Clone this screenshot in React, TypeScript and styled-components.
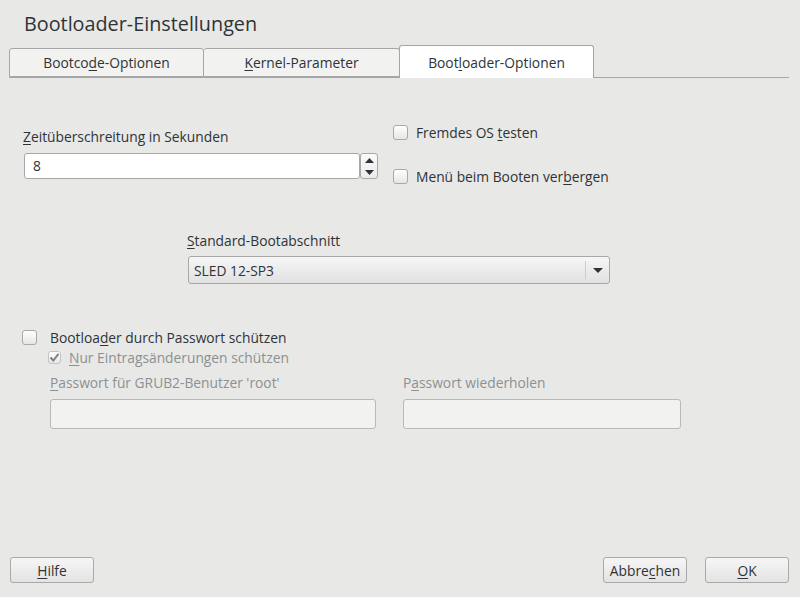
import React from "react";
import styled, { createGlobalStyle } from "styled-components";

const Global = createGlobalStyle`
  html, body { margin: 0; padding: 0; background: #e8e8e7; }
  body { font-family: "Open Sans", "Noto Sans", sans-serif; color: #2e3436; }
  * { box-sizing: border-box; }
`;

const Window = styled.div`
  width: 800px;
  height: 597px;
  display: flex;
  flex-direction: column;
  background: #e8e8e7;
  font-size: 13.8px;
  overflow: hidden;
`;

const Title = styled.h1`
  margin: 0;
  padding: 10px 0 0 24px;
  height: 45px;
  font-size: 19.8px;
  font-weight: 400;
  line-height: 28px;
  color: #2e3436;
`;

const TabBar = styled.div`
  display: flex;
  align-items: flex-end;
  margin: 0 11px 0 9px;
  height: 33px;
  border-bottom: 1px solid #a6a6a6;
`;

const Tab = styled.div<{ $active?: boolean; $first?: boolean }>`
  width: ${(p) => (p.$active ? 195 : p.$first ? 195 : 196)}px;
  height: ${(p) => (p.$active ? 33 : 29)}px;
  margin-bottom: ${(p) => (p.$active ? -1 : 0)}px;
  margin-left: ${(p) => (p.$active ? -1 : 0)}px;
  display: flex;
  align-items: center;
  justify-content: center;
  background: ${(p) => (p.$active ? "#ffffff" : "#f2f2f1")};
  border: 1px solid #a6a6a6;
  border-bottom: ${(p) => (p.$active ? "none" : "1px solid #a6a6a6")};
  border-left: ${(p) => (p.$first || p.$active ? "1px solid #a6a6a6" : "none")};
  border-radius: 3px 3px 0 0;
  font-size: 13.8px;
  color: #2e3436;
  padding-top: ${(p) => (p.$active ? 1 : 0)}px;
`;

const U = styled.span`
  text-decoration: underline;
  text-underline-offset: 2px;
  text-decoration-thickness: 1px;
`;

const Body = styled.div`
  flex: 1;
  display: flex;
  flex-direction: column;
`;

const TopRow = styled.div`
  display: flex;
  padding-top: 44px;
  height: 129px;
`;

const LeftCol = styled.div`
  width: 380px;
  flex-shrink: 0;
  padding-left: 23px;
  padding-top: 5px;
`;

const Label = styled.div<{ $disabled?: boolean }>`
  height: 20px;
  line-height: 20px;
  font-size: 13.8px;
  color: ${(p) => (p.$disabled ? "#8d9091" : "#2e3436")};
  white-space: nowrap;
`;

const SpinRow = styled.div`
  display: flex;
  margin-top: 6px;
  margin-left: 1px;
`;

const SpinInput = styled.div`
  width: 336px;
  height: 26px;
  background: #ffffff;
  border: 1px solid #a8a8a8;
  border-radius: 3px;
  padding-left: 8px;
  line-height: 24px;
  font-size: 13.8px;
`;

const SpinButtons = styled.div`
  width: 18px;
  height: 26px;
  border: 1px solid #a8a8a8;
  border-radius: 3px;
  background: linear-gradient(#fbfbfb, #ebebeb);
  display: flex;
  flex-direction: column;
  align-items: center;
  justify-content: space-around;
`;

const RightCol = styled.div`
  display: flex;
  flex-direction: column;
  gap: 24px;
  padding-left: 13px;
`;

const CheckRow = styled.div<{ $indent?: number; $disabled?: boolean }>`
  display: flex;
  align-items: center;
  height: 20px;
  gap: 8px;
  color: ${(p) => (p.$disabled ? "#8d9091" : "#2e3436")};
  margin-left: ${(p) => p.$indent || 0}px;
`;

const Box = styled.div<{ $size?: number; $disabled?: boolean }>`
  width: ${(p) => p.$size || 15}px;
  height: ${(p) => p.$size || 15}px;
  border: 1px solid ${(p) => (p.$disabled ? "#c4c4c4" : "#a9a9a9")};
  border-radius: 3px;
  background: linear-gradient(#ffffff, #e6e6e6);
  display: flex;
  align-items: center;
  justify-content: center;
  flex-shrink: 0;
`;

const ComboSection = styled.div`
  padding-left: 187px;
  height: 120px;
  padding-top: 24px;
`;

const Combo = styled.div`
  margin-top: 5px;
  margin-left: 1px;
  width: 422px;
  height: 28px;
  border: 1px solid #a8a8a8;
  border-radius: 3px;
  background: linear-gradient(#f6f6f6, #e1e1e1);
  display: flex;
  align-items: center;
  padding-left: 5px;
  font-size: 13.8px;
`;

const ComboText = styled.div`
  flex: 1;
`;

const ComboSep = styled.div`
  width: 1px;
  height: 18px;
  background: #cdcdcd;
`;

const ComboArrow = styled.div`
  width: 23px;
  display: flex;
  justify-content: center;
`;

const PwSection = styled.div`
  display: flex;
  flex-direction: column;
  padding-left: 22px;
`;

const FieldRow = styled.div`
  display: flex;
  gap: 27px;
  margin-left: 28px;
  margin-top: 6px;
`;

const Field = styled.div<{ $w: number }>`
  width: ${(p) => p.$w}px;
  display: flex;
  flex-direction: column;
`;

const PwInput = styled.div`
  margin-top: 6px;
  height: 30px;
  background: #f2f2f1;
  border: 1px solid #b9b9b9;
  border-radius: 3px;
`;

const Spacer = styled.div`
  flex: 1;
`;

const Footer = styled.div`
  display: flex;
  padding: 0 11px 14px 10px;
  gap: 18px;
`;

const Button = styled.button`
  width: 84px;
  height: 26px;
  border: 1px solid #a9a9a9;
  border-radius: 3px;
  background: linear-gradient(#f6f6f6, #e3e3e3);
  font-family: "Open Sans", "Noto Sans", sans-serif;
  font-size: 13.8px;
  color: #2e3436;
  padding: 0;
`;

const Check = () => (
  <svg width="11" height="11" viewBox="0 0 11 11">
    <path d="M1.5 5.5 L4.3 8.5 L9.5 1.8" fill="none" stroke="#7f8283" strokeWidth="2" />
  </svg>
);

export default function App() {
  return (
    <Window>
      <Global />
      <Title>Bootloader-Einstellungen</Title>
      <TabBar>
        <Tab $first>
          <span>
            Bootco<U>d</U>e-Optionen
          </span>
        </Tab>
        <Tab>
          <span>
            <U>K</U>ernel-Parameter
          </span>
        </Tab>
        <Tab $active>
          <span>
            Boot<U>l</U>oader-Optionen
          </span>
        </Tab>
      </TabBar>
      <Body>
        <TopRow>
          <LeftCol>
            <Label>
              <U>Z</U>eitüberschreitung in Sekunden
            </Label>
            <SpinRow>
              <SpinInput>8</SpinInput>
              <SpinButtons>
                <svg width="9" height="5" viewBox="0 0 9 5">
                  <path d="M0 5 L4.5 0 L9 5 Z" fill="#2e3436" />
                </svg>
                <svg width="9" height="5" viewBox="0 0 9 5">
                  <path d="M0 0 L4.5 5 L9 0 Z" fill="#2e3436" />
                </svg>
              </SpinButtons>
            </SpinRow>
          </LeftCol>
          <RightCol>
            <CheckRow>
              <Box />
              <span>
                Fremdes OS <U>t</U>esten
              </span>
            </CheckRow>
            <CheckRow>
              <Box />
              <span>
                Menü beim Booten ver<U>b</U>ergen
              </span>
            </CheckRow>
          </RightCol>
        </TopRow>
        <ComboSection>
          <Label>
            <U>S</U>tandard-Bootabschnitt
          </Label>
          <Combo>
            <ComboText>SLED 12-SP3</ComboText>
            <ComboSep />
            <ComboArrow>
              <svg width="10" height="5" viewBox="0 0 10 5">
                <path d="M0 0 L5 5 L10 0 Z" fill="#2e3436" />
              </svg>
            </ComboArrow>
          </Combo>
        </ComboSection>
        <PwSection>
          <CheckRow>
            <Box />
            <span style={{ marginLeft: 5 }}>
              Bootloa<U>d</U>er durch Passwort schützen
            </span>
          </CheckRow>
          <CheckRow $indent={26} $disabled>
            <Box $size={13} $disabled>
              <Check />
            </Box>
            <span>
              <U>N</U>ur Eintragsänderungen schützen
            </span>
          </CheckRow>
          <FieldRow>
            <Field $w={326}>
              <Label $disabled>
                <U>P</U>asswort für GRUB2-Benutzer 'root'
              </Label>
              <PwInput />
            </Field>
            <Field $w={278}>
              <Label $disabled>
                P<U>a</U>sswort wiederholen
              </Label>
              <PwInput />
            </Field>
          </FieldRow>
        </PwSection>
        <Spacer />
        <Footer>
          <Button>
            <U>H</U>ilfe
          </Button>
          <Spacer />
          <Button>
            Abbre<U>c</U>hen
          </Button>
          <Button>
            <U>O</U>K
          </Button>
        </Footer>
      </Body>
    </Window>
  );
}
